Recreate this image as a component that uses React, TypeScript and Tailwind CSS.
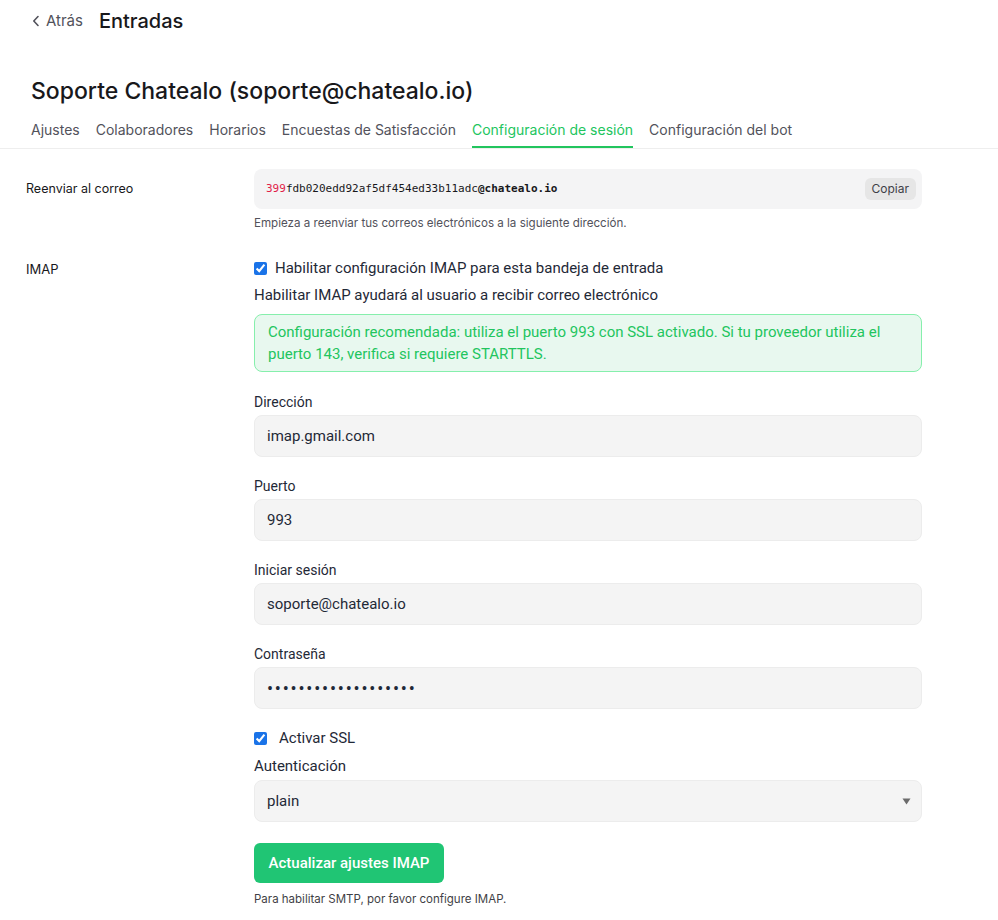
import React from "react";

const inter = { fontFamily: "Inter, 'Noto Sans', sans-serif" };
const roboto = { fontFamily: "Roboto, 'Liberation Sans', sans-serif" };

const tabs = [
  "Ajustes",
  "Colaboradores",
  "Horarios",
  "Encuestas de Satisfacción",
  "Configuración de sesión",
  "Configuración del bot",
];

function Field({ label, value }: { label: string; value: string }) {
  return (
    <div className="flex flex-col">
      <label className="text-[14px] leading-5 text-[#1f2937] mb-[3px]">{label}</label>
      <div className="h-[42px] rounded-lg bg-[#f4f4f4] border border-[#ececec] px-3 flex items-center text-[15px] text-[#1f2937]">
        {value}
      </div>
    </div>
  );
}

export default function App() {
  return (
    <div className="w-[998px] min-h-[920px] bg-white text-[#18181b]" style={inter}>
      {/* top bar */}
      <div className="flex items-center h-[42px] pl-[32px] gap-[16px]">
        <button className="flex items-center gap-[6px] text-[15px] text-[#52525b]">
          <svg width="8" height="12" viewBox="0 0 8 12" fill="none">
            <path d="M6 1.5 1.8 6 6 10.5" stroke="#52525b" strokeWidth="1.6" strokeLinecap="round" strokeLinejoin="round" />
          </svg>
          Atrás
        </button>
        <h1 className="text-[20px] font-medium text-[#18181b]">Entradas</h1>
      </div>

      {/* inbox header */}
      <div className="pt-[34px] border-b border-[#eeeeee]">
        <h2 className="pl-[31px] text-[23px] font-medium leading-[30px] text-[#18181b]">
          Soporte Chatealo (soporte@chatealo.io)
        </h2>
        <nav className="flex gap-[16px] pl-[31px] mt-[14px]">
          {tabs.map((t) => {
            const active = t === "Configuración de sesión";
            return (
              <div
                key={t}
                className={
                  "pb-[6px] text-[14px] leading-5 border-b-2 " +
                  (active ? "border-[#22c55e] text-[#22c55e]" : "border-transparent text-[#52525b]")
                }
              >
                {t}
              </div>
            );
          })}
        </nav>
      </div>

      {/* forward email row */}
      <div className="flex pt-[20px]">
        <div className="w-[254px] pl-[26px] pt-[11px] text-[12.5px] leading-[18px] text-[#18181b]">
          Reenviar al correo
        </div>
        <div className="w-[668px]">
          <div className="h-[40px] rounded-lg bg-[#f4f4f5] flex items-center justify-between pl-[12px] pr-[6px]">
            <span className="text-[11px] text-[#18181b]" style={{ fontFamily: "'DejaVu Sans Mono', 'Liberation Mono', monospace" }}>
              <span className="text-[#e11d48]">399</span>fdb020edd92af5df454ed33b11adc
              <span className="font-bold">@chatealo.io</span>
            </span>
            <button className="h-[22px] px-[7px] rounded-md bg-[#e6e6e6] text-[12px] text-[#3f3f46]">Copiar</button>
          </div>
          <p className="mt-[6px] text-[11.6px] leading-4 text-[#52525b]">
            Empieza a reenviar tus correos electrónicos a la siguiente dirección.
          </p>
        </div>
      </div>

      {/* IMAP row */}
      <div className="flex pt-[27px] pb-[16px]" style={roboto}>
        <div className="w-[254px] pl-[26px] pt-[1px] text-[14px] leading-5 text-[#18181b]" style={inter}>
          <span className="text-[13px]">IMAP</span>
        </div>
        <div className="w-[668px] flex flex-col">
          <label className="flex items-center gap-[8px] text-[15px] leading-5 text-[#1f2937]">
            <input type="checkbox" defaultChecked className="w-[13px] h-[13px] accent-[#1a73e8]" />
            Habilitar configuración IMAP para esta bandeja de entrada
          </label>
          <p className="mt-[7px] text-[15px] leading-5 text-[#1f2937]">
            Habilitar IMAP ayudará al usuario a recibir correo electrónico
          </p>
          <div className="mt-[9px] rounded-lg border border-[#86efac] bg-[#e8f8ef] px-[13px] py-[6px] text-[15px] leading-[22px] text-[#22c55e]">
            Configuración recomendada: utiliza el puerto 993 con SSL activado. Si tu proveedor utiliza el puerto 143,
            verifica si requiere STARTTLS.
          </div>

          <div className="mt-[20px] flex flex-col gap-[19px]">
            <Field label="Dirección" value="imap.gmail.com" />
            <Field label="Puerto" value="993" />
            <Field label="Iniciar sesión" value="soporte@chatealo.io" />
            <div className="flex flex-col">
              <label className="text-[14px] leading-5 text-[#1f2937] mb-[3px]">Contraseña</label>
              <div className="h-[42px] rounded-lg bg-[#f4f4f4] border border-[#ececec] px-3 flex items-center text-[18px] text-[#1f2937] tracking-[1.8px]">
                •••••••••••••••••••
              </div>
            </div>
          </div>

          <label className="mt-[19px] flex items-center gap-[12px] text-[15px] leading-5 text-[#1f2937]">
            <input type="checkbox" defaultChecked className="w-[13px] h-[13px] accent-[#1a73e8]" />
            Activar SSL
          </label>

          <div className="mt-[8px] flex flex-col">
            <label className="text-[15px] leading-5 text-[#1f2937] mb-[4px]">Autenticación</label>
            <div className="h-[42px] rounded-lg bg-[#f4f4f4] border border-[#ececec] pl-3 pr-[10px] flex items-center justify-between text-[15px] text-[#1f2937]">
              <span>plain</span>
              <svg width="9" height="7" viewBox="0 0 9 7">
                <path d="M0.5 0.5h8L4.5 6.5z" fill="#6b6b6b" />
              </svg>
            </div>
          </div>

          <button className="mt-[21px] w-[190px] h-[40px] rounded-md bg-[#20c574] text-white text-[15px] font-medium">
            Actualizar ajustes IMAP
          </button>
          <p className="mt-[8px] text-[11.5px] leading-4 text-[#3f3f46]" style={inter}>
            Para habilitar SMTP, por favor configure IMAP.
          </p>
        </div>
      </div>
    </div>
  );
}
